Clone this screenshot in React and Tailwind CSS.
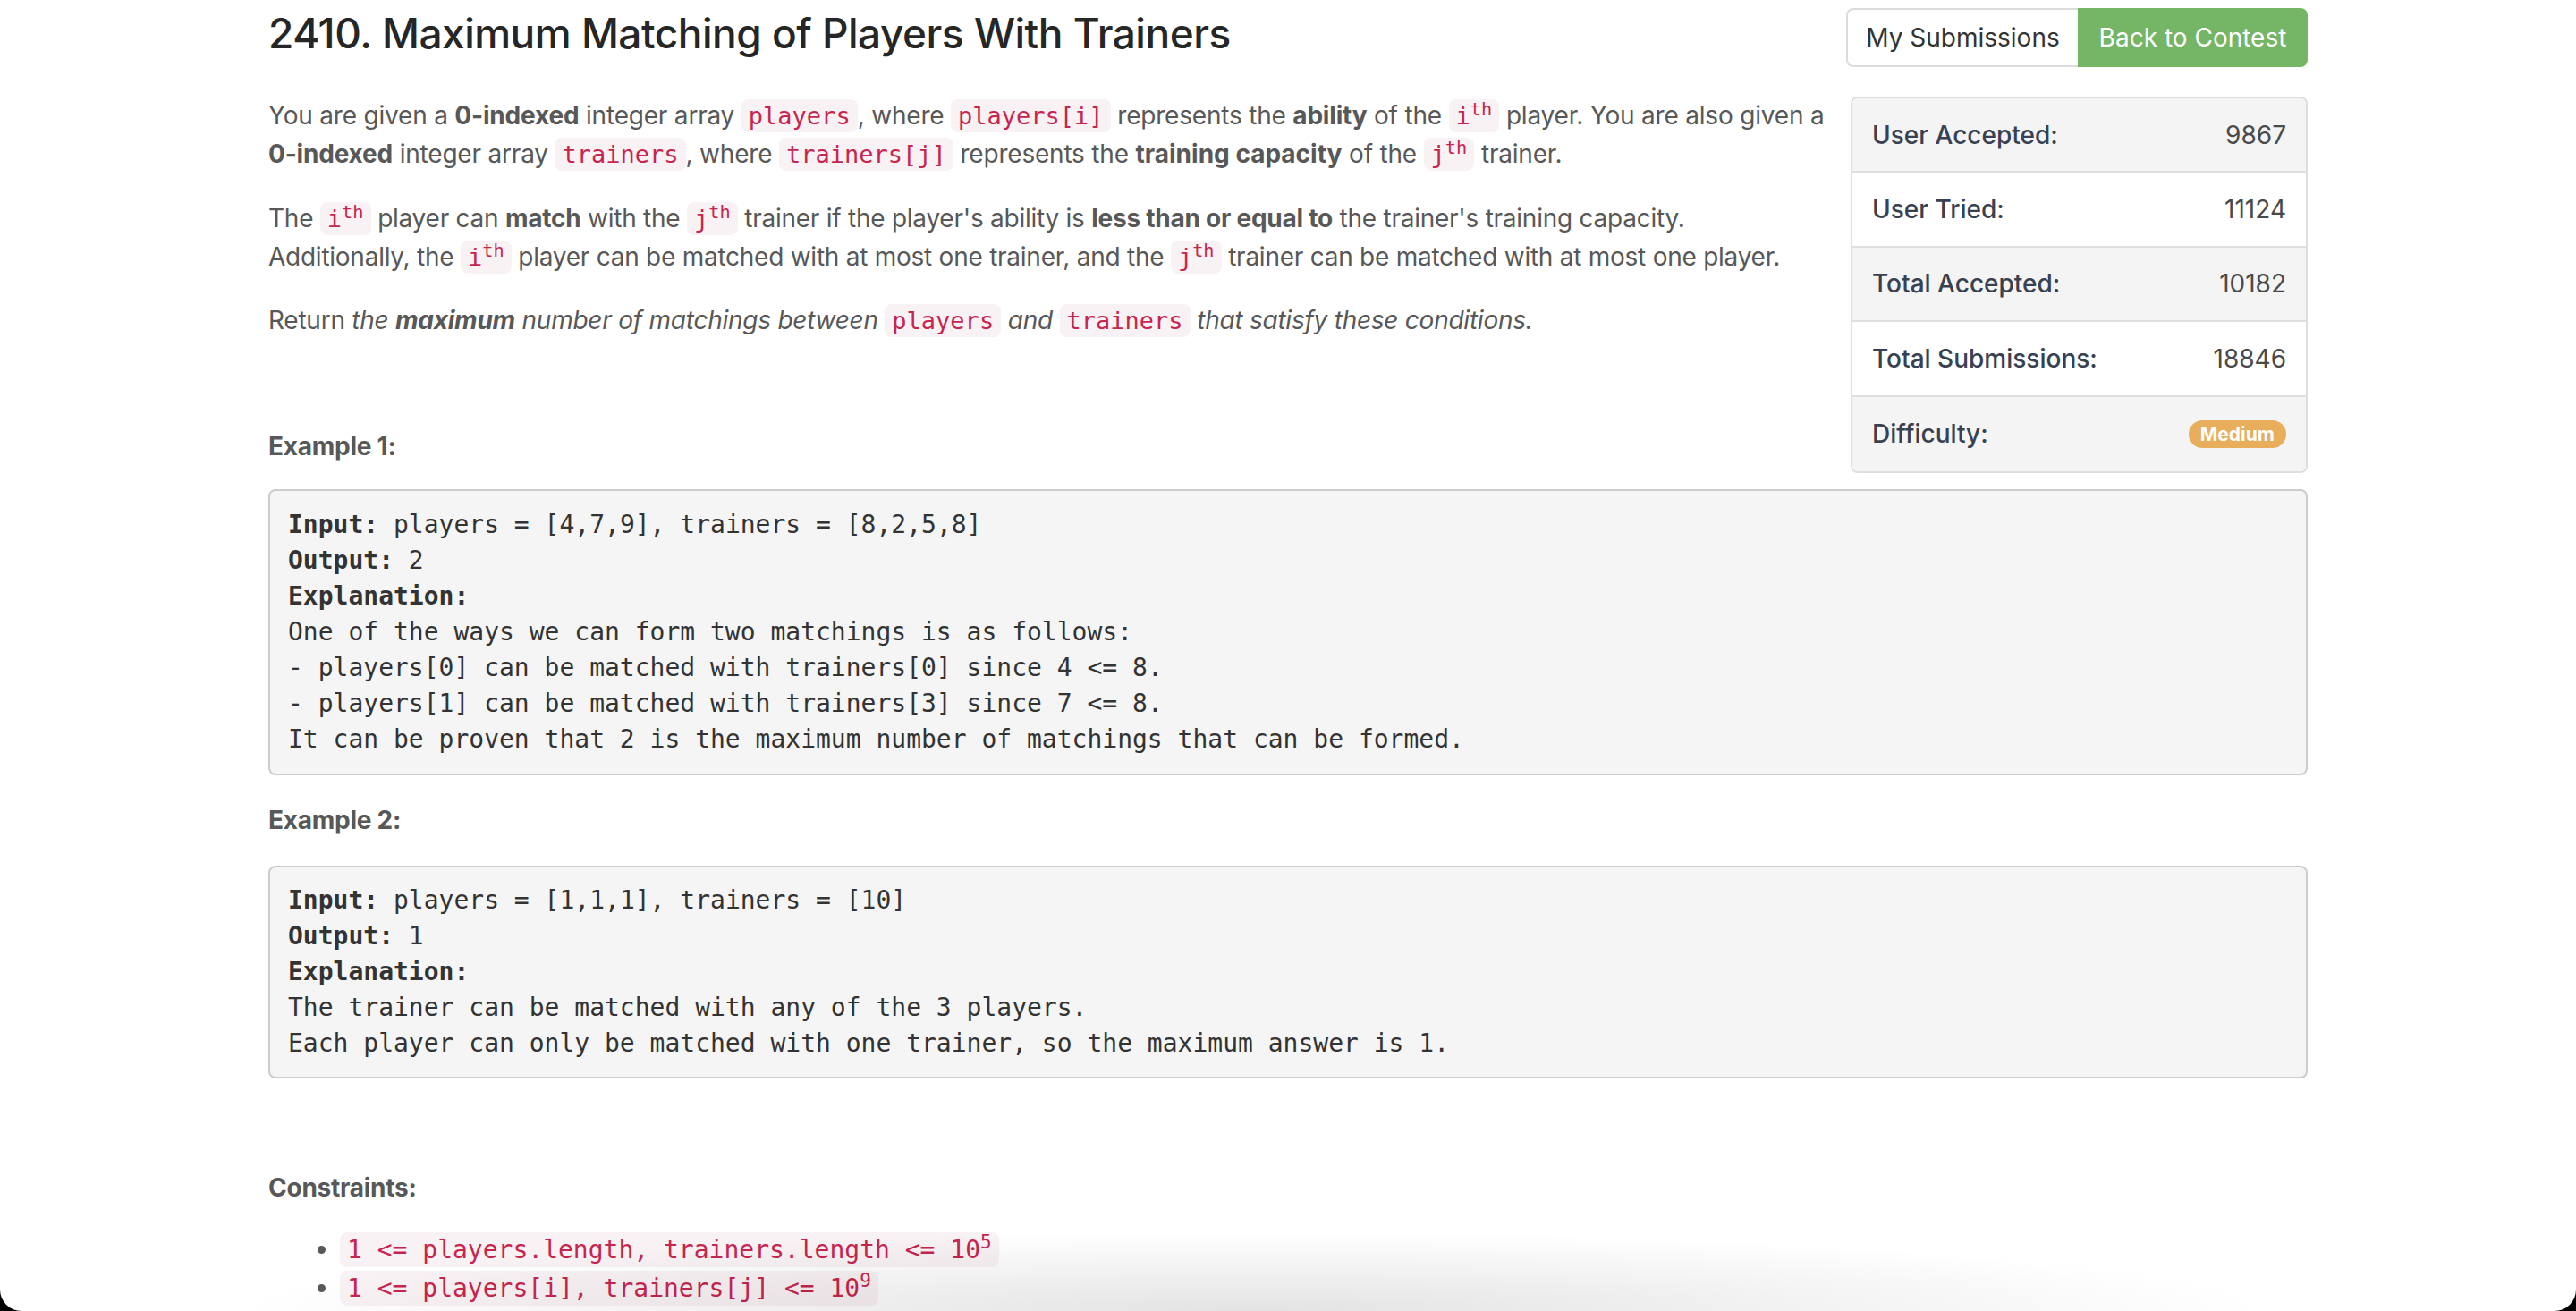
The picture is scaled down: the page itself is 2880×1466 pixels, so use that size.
import React from "react";

const C = ({ children, big }) => (
  <code
    className={
      "font-['DejaVu_Sans_Mono',monospace] tracking-normal text-[#c7254e] bg-[#f9f2f4] rounded-[8px] px-[8px] py-[3px] " +
      (big ? "text-[28px]" : "text-[27px]")
    }
  >
    {children}
  </code>
);

const Th = ({ v }) => (
  <C>
    {v}
    <sup>th</sup>
  </C>
);

const StatRow = ({ label, children, shaded, last }) => (
  <div
    className={
      "flex items-center justify-between px-[22px] h-[83.4px] " +
      (shaded ? "bg-[#f4f4f4] " : "bg-white ") +
      (last ? "" : "border-b-2 border-[#dedede]")
    }
  >
    <span className="text-[28px] font-medium text-[#384152]">{label}</span>
    {children}
  </div>
);

const Val = ({ children }) => (
  <span className="text-[28px] text-[#4a4a4a]">{children}</span>
);

export default function App() {
  return (
    <div className="relative h-[1466px] w-full overflow-hidden bg-black">
      <div className="h-full w-full bg-white rounded-b-[24px] font-['Inter',sans-serif] text-[#585858]">
        <div className="mx-auto w-[2280px]">
          <div className="flex items-start">
            <div className="flex-1 min-w-0">
              <h1 className="pt-[8px] text-[46px] leading-[58px] font-medium text-[#262626] tracking-[-0.5px]">
                2410. Maximum Matching of Players With Trainers
              </h1>
              <p className="mt-[42px] text-[28px] leading-[42px] tracking-[-0.2px]">
                You are given a <b>0-indexed</b> integer array <C>players</C>, where <C>players[i]</C> represents the <b>ability</b> of the <Th v="i" /> player. You are also given a
                <br />
                <b>0-indexed</b> integer array <C>trainers</C>, where <C>trainers[j]</C> represents the <b className="tracking-normal">training capacity</b> of the <Th v="j" /> trainer.
              </p>
              <p className="mt-[29px] text-[28px] leading-[42px] tracking-[-0.25px]">
                The <Th v="i" /> player can <b>match</b> with the <Th v="j" /> trainer if the player's ability is <b>less than or equal to</b> the trainer's training capacity.
                <br />
                Additionally, the <Th v="i" /> player can be matched with at most one trainer, and the <Th v="j" /> trainer can be matched with at most one player.
              </p>
              <p className="mt-[28px] text-[28px] leading-[42px] tracking-[-0.25px]">
                Return <i>the <b>maximum</b> number of matchings between</i> <C>players</C> <i>and</i> <C>trainers</C> <i>that satisfy these conditions.</i>
              </p>
              <p className="mt-[98px] text-[28px] leading-[42px] font-bold tracking-[-0.25px]">Example 1:</p>
            </div>
            <div className="w-[516px] flex flex-col items-end">
              <div className="mt-[9px] flex h-[66px] w-[516px] text-[28px]">
                <div className="flex w-[259px] items-center justify-center rounded-l-[8px] border-2 border-r-0 border-[#dcdcdc] bg-white text-[#333]">
                  My Submissions
                </div>
                <div className="flex flex-1 items-center justify-center rounded-r-[8px] border-2 border-[#74b566] bg-[#74b566] text-white">
                  Back to Contest
                </div>
              </div>
              <div className="mt-[33px] w-[511px] overflow-hidden rounded-[8px] border-2 border-[#dedede]">
                <StatRow label="User Accepted:" shaded>
                  <Val>9867</Val>
                </StatRow>
                <StatRow label="User Tried:">
                  <Val>11124</Val>
                </StatRow>
                <StatRow label="Total Accepted:" shaded>
                  <Val>10182</Val>
                </StatRow>
                <StatRow label="Total Submissions:">
                  <Val>18846</Val>
                </StatRow>
                <StatRow label="Difficulty:" shaded last>
                  <span className="flex h-[31px] items-center rounded-full bg-[#e8ae5c] px-[13px] text-[21px] font-bold text-white">
                    Medium
                  </span>
                </StatRow>
              </div>
            </div>
          </div>

          <pre className="mt-[18px] rounded-[8px] border-2 border-[#cccccc] bg-[#f5f5f5] px-[20px] py-[18px] font-['DejaVu_Sans_Mono',monospace] text-[28px] leading-[40px] text-[#333]">
            <b>Input:</b> players = [4,7,9], trainers = [8,2,5,8]
            {"\n"}
            <b>Output:</b> 2
            {"\n"}
            <b>Explanation:</b>
            {"\n"}One of the ways we can form two matchings is as follows:
            {"\n"}- players[0] can be matched with trainers[0] since 4 {"<="} 8.
            {"\n"}- players[1] can be matched with trainers[3] since 7 {"<="} 8.
            {"\n"}It can be proven that 2 is the maximum number of matchings that can be formed.
          </pre>

          <p className="mt-[29px] text-[28px] leading-[42px] font-bold tracking-[-0.25px]">Example 2:</p>

          <pre className="mt-[30px] rounded-[8px] border-2 border-[#cccccc] bg-[#f5f5f5] px-[20px] py-[17px] font-['DejaVu_Sans_Mono',monospace] text-[28px] leading-[40px] text-[#333]">
            <b>Input:</b> players = [1,1,1], trainers = [10]
            {"\n"}
            <b>Output:</b> 1
            {"\n"}
            <b>Explanation:</b>
            {"\n"}The trainer can be matched with any of the 3 players.
            {"\n"}Each player can only be matched with one trainer, so the maximum answer is 1.
          </pre>

          <p className="mt-[101px] text-[28px] leading-[42px] font-bold tracking-[-0.25px]">Constraints:</p>

          <ul className="mt-[27px] list-disc pl-[80px] text-[28px] leading-[42px]">
            <li>
              <C big>
                1 {"<="} players.length, trainers.length {"<="} 10<sup>5</sup>
              </C>
            </li>
            <li>
              <C big>
                1 {"<="} players[i], trainers[j] {"<="} 10<sup>9</sup>
              </C>
            </li>
          </ul>
        </div>
      </div>
      <div className="pointer-events-none absolute bottom-[-90px] left-[250px] h-[180px] w-[2300px] bg-[radial-gradient(ellipse_at_center,rgba(0,0,0,0.11),rgba(0,0,0,0.04)_45%,transparent_70%)]" />
    </div>
  );
}
